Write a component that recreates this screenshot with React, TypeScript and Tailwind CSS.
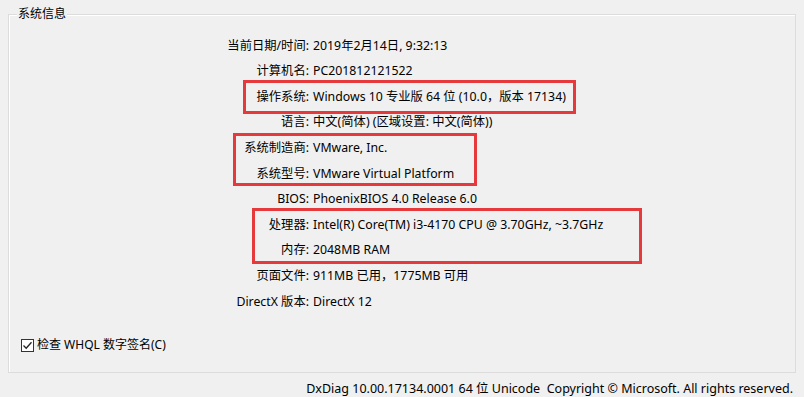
import React from "react";

const rows: [string, string][] = [
  ["当前日期/时间:", "2019年2月14日, 9:32:13"],
  ["计算机名:", "PC201812121522"],
  ["操作系统:", "Windows 10 专业版 64 位 (10.0，版本 17134)"],
  ["语言:", "中文(简体) (区域设置: 中文(简体))"],
  ["系统制造商:", "VMware, Inc."],
  ["系统型号:", "VMware Virtual Platform"],
  ["BIOS:", "PhoenixBIOS 4.0 Release 6.0"],
  ["处理器:", "Intel(R) Core(TM) i3-4170 CPU @ 3.70GHz, ~3.7GHz"],
  ["内存:", "2048MB RAM"],
  ["页面文件:", "911MB 已用，1775MB 可用"],
  ["DirectX 版本:", "DirectX 12"],
];

export default function App() {
  return (
    <div
      className="relative w-[804px] h-[397px] bg-[#f0f0f0] text-black text-[12.3px] overflow-hidden"
      style={{ fontFamily: '"Noto Sans", "Noto Sans CJK SC", sans-serif' }}
    >
      <div className="pt-[14px] pl-[8px] pr-[8px]">
        <div className="relative flex flex-col h-[359px] w-[788px] border border-[#dcdcdc] shadow-[inset_1px_1px_0_#ffffff]">
          <div className="absolute left-[8px] top-[-9px] bg-[#f0f0f0] px-[1px] leading-[16px] text-[12px]">
            系统信息
          </div>
          <div className="flex flex-col pt-[18px]">
            {rows.map(([k, v]) => (
              <div key={k} className="flex h-[25.6px] items-center">
                <div className="w-[300px] text-right whitespace-nowrap">{k}</div>
                <div className="pl-[4px] whitespace-nowrap">{v}</div>
              </div>
            ))}
          </div>
          <div className="mt-auto mb-[18px] ml-[12px] flex items-center gap-[3px]">
            <div className="w-[13px] h-[13px] border border-[#333333] bg-white flex items-center justify-center">
              <svg width="11" height="11" viewBox="0 0 11 11">
                <path d="M1.5 5.5 L4.2 8.2 L9.5 2.2" fill="none" stroke="#222" strokeWidth="1.3" />
              </svg>
            </div>
            <span className="whitespace-nowrap text-[12px]">检查 WHQL 数字签名(C)</span>
          </div>
        </div>
      </div>
      <div className="flex justify-end pr-[11px] pt-[7px] text-[12.5px] whitespace-nowrap">
        DxDiag 10.00.17134.0001 64 位 Unicode&nbsp;&nbsp;Copyright © Microsoft. All rights reserved.
      </div>
      <div className="absolute left-[243px] top-[80px] w-[333px] h-[34px] border-[3px] border-[#e5393c]" />
      <div className="absolute left-[233px] top-[133px] w-[244px] h-[53px] border-[3px] border-[#e5393c]" />
      <div className="absolute left-[252px] top-[208px] w-[390px] h-[56px] border-[3px] border-[#e5393c]" />
    </div>
  );
}
